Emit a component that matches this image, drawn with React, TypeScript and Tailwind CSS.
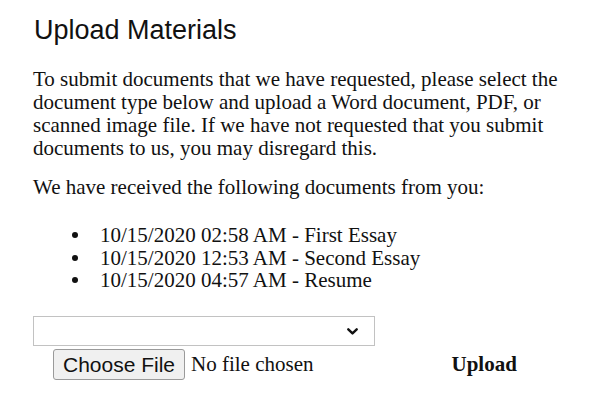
import React from "react";

const documents = [
    "10/15/2020 02:58 AM - First Essay",
    "10/15/2020 12:53 AM - Second Essay",
    "10/15/2020 04:57 AM - Resume",
];

const App = () => {
    return (
        <div className="min-h-screen bg-white pl-[33px] pt-[15px] text-[#111] font-['Liberation_Serif','Times_New_Roman',serif]">
            <h2 className="pl-[1px] text-[27px] leading-[31px] font-['Liberation_Sans',Arial,sans-serif] font-normal">
                Upload Materials
            </h2>

            <p className="mt-[22px] w-[540px] text-[21px] leading-[23px]">
                To submit documents that we have requested, please select the
                document type below and upload a Word document, PDF, or scanned
                image file. If we have not requested that you submit documents to
                us, you may disregard this.
            </p>

            <p className="mt-[16px] text-[21px] leading-[23px]">
                We have received the following documents from you:
            </p>

            <ul className="mt-[25px] pl-[39px] text-[21px] leading-[22.5px]">
                {documents.map((doc) => (
                    <li key={doc} className="flex items-center">
                        <span className="mr-[22px] h-[6px] w-[6px] rounded-full bg-[#111]" />
                        <span>{doc}</span>
                    </li>
                ))}
            </ul>

            <div className="relative mt-[24px] w-[342px]">
                <select className="block h-[30px] w-full appearance-none border border-[#c2c2c2] bg-white outline-none" />
                <svg
                    className="pointer-events-none absolute right-[17px] top-[12px]"
                    width="11"
                    height="7"
                    viewBox="0 0 11 7"
                    fill="none"
                >
                    <path d="M1.3 1.3 L5.5 5.4 L9.7 1.3" stroke="#111" strokeWidth="2.4" strokeLinecap="round" strokeLinejoin="round" />
                </svg>
            </div>

            <div className="mt-[3px] flex items-center pl-[20px] text-[21px]">
                <button className="h-[31px] w-[132px] rounded-[3px] border border-[#9a9a9a] bg-[#f0f0f0] text-[21px] leading-none text-[#111] font-['Liberation_Sans',Arial,sans-serif]">
                    Choose File
                </button>
                <span className="ml-[6px]">No file chosen</span>
                <span className="ml-[138px] font-bold">Upload</span>
            </div>
        </div>
    );
};

export default App;
